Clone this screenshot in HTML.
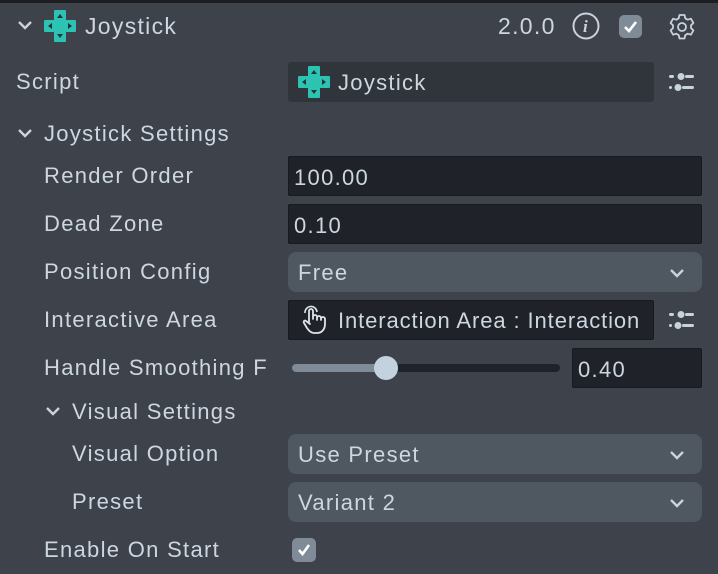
<!DOCTYPE html>
<html><head><meta charset="utf-8"><style>
*{margin:0;padding:0;box-sizing:border-box}
body{width:718px;height:574px;background:#3d424b;font-family:"Liberation Sans",sans-serif;color:#cdd7e1;font-size:22px;letter-spacing:1.3px;position:relative;overflow:hidden}
.a{position:absolute}
.t{position:absolute;line-height:24px;white-space:nowrap}
.in{position:absolute;background:#1f2228;border:1px solid #171a1e;border-radius:2px}
.dd{position:absolute;background:#4f5761;border-radius:8px}
svg{position:absolute}
</style></head><body>
<div class="a" style="left:0;top:0;width:718px;height:3px;background:#1c1e22"></div>

<svg style="left:16px;top:18px" width="18" height="14" viewBox="0 0 18 14"><path d="M3 4l6 6 6-6" fill="none" stroke="#c9d3dd" stroke-width="2.4"/></svg>
<svg style="left:44px;top:10px" width="32" height="32" viewBox="0 0 32 32"><path d="M11 1h10v10h10v10H21v10H11V21H1V11h10z" fill="#2cc3b3" stroke="#2cc3b3" stroke-width="2" stroke-linejoin="round"/><path d="M16 4l3 4h-6zM16 28l3-4h-6zM4 16l4-3v6zM28 16l-4-3v6z" fill="#25333a"/></svg>
<div class="t" style="left:85px;top:14px;font-size:23px">Joystick</div>
<div class="t" style="left:498px;top:14px;font-size:23px">2.0.0</div>
<svg style="left:572px;top:12px" width="28" height="28" viewBox="0 0 28 28"><circle cx="14" cy="14" r="12.5" fill="none" stroke="#c9d3dd" stroke-width="2"/><text x="14" y="20" text-anchor="middle" font-family="Liberation Serif" font-style="italic" font-weight="bold" font-size="17" fill="#c9d3dd">i</text></svg>
<div class="a" style="left:619px;top:15px;width:23px;height:23px;background:#7f8b97;border-radius:5px"></div>
<svg style="left:619px;top:15px" width="23" height="23" viewBox="0 0 23 23"><path d="M6 12l4 4 7-9" fill="none" stroke="#fff" stroke-width="2.6"/></svg>
<svg style="left:667px;top:12px" width="30" height="30" viewBox="0 0 30 30"><path d="M12.5 3h5l.8 3.3 2.4 1.4 3.2-1 2.5 4.3-2.4 2.3v2.8l2.4 2.3-2.5 4.3-3.2-1-2.4 1.4-.8 3.4h-5l-.8-3.4-2.4-1.4-3.2 1-2.5-4.3 2.4-2.3v-2.8L3.6 11l2.5-4.3 3.2 1 2.4-1.4z" fill="none" stroke="#c9d3dd" stroke-width="1.8" stroke-linejoin="round"/><circle cx="15" cy="15" r="4" fill="none" stroke="#c9d3dd" stroke-width="1.8"/></svg>

<div class="t" style="left:16px;top:70px">Script</div>
<div class="a" style="left:288px;top:62px;width:366px;height:40px;background:#30343b;border-radius:3px"></div>
<svg style="left:298px;top:66px" width="32" height="32" viewBox="0 0 32 32"><path d="M11 1h10v10h10v10H21v10H11V21H1V11h10z" fill="#2cc3b3" stroke="#2cc3b3" stroke-width="2" stroke-linejoin="round"/><path d="M16 4l3 4h-6zM16 28l3-4h-6zM4 16l4-3v6zM28 16l-4-3v6z" fill="#25333a"/></svg>
<div class="t" style="left:338px;top:71px">Joystick</div>
<svg style="left:668px;top:70px" width="27" height="24" viewBox="0 0 27 24"><g fill="#c9d3dd"><rect x="1" y="5" width="5" height="3" rx="1.5"/><rect x="17" y="5" width="9" height="3" rx="1.5"/><circle cx="13" cy="6.5" r="3.5"/><rect x="1" y="16" width="3" height="3" rx="1.5"/><rect x="14" y="16" width="12" height="3" rx="1.5"/><circle cx="10" cy="17.5" r="3.5"/></g></svg>

<svg style="left:16px;top:126px" width="18" height="14" viewBox="0 0 18 14"><path d="M3 4l6 6 6-6" fill="none" stroke="#c9d3dd" stroke-width="2.4"/></svg>
<div class="t" style="left:44px;top:122px">Joystick Settings</div>

<div class="t" style="left:44px;top:164px">Render Order</div>
<div class="in" style="left:288px;top:156px;width:414px;height:40px"></div>
<div class="t" style="left:294px;top:166px">100.00</div>

<div class="t" style="left:44px;top:212px">Dead Zone</div>
<div class="in" style="left:288px;top:204px;width:414px;height:40px"></div>
<div class="t" style="left:294px;top:214px">0.10</div>

<div class="t" style="left:44px;top:260px">Position Config</div>
<div class="dd" style="left:288px;top:252px;width:414px;height:40px"></div>
<div class="t" style="left:298px;top:261px">Free</div>
<svg style="left:668px;top:266px" width="18" height="14" viewBox="0 0 18 14"><path d="M3 4l6 6 6-6" fill="none" stroke="#c9d3dd" stroke-width="2.4"/></svg>

<div class="t" style="left:44px;top:308px">Interactive Area</div>
<div class="in" style="left:288px;top:300px;width:366px;height:40px"></div>
<svg style="left:300px;top:305px" width="28" height="30" viewBox="0 0 28 30"><path d="M9 17V6a2 2 0 014 0v8M13 12a2 2 0 014 0v3M17 13a2 2 0 014 0v2M21 14a2 2 0 014 0v5c0 5-3 9-8 9h-3c-3 0-5-2-7-5l-3-5c-1-2 1-3 2-2l4 3" fill="none" stroke="#dde4ea" stroke-width="1.8" stroke-linecap="round" stroke-linejoin="round"/><path d="M5 8a6 6 0 0112-1" fill="none" stroke="#dde4ea" stroke-width="1.6"/></svg>
<div class="t" style="left:338px;top:309px;letter-spacing:0.9px">Interaction Area : Interaction</div>
<svg style="left:668px;top:308px" width="27" height="24" viewBox="0 0 27 24"><g fill="#c9d3dd"><rect x="1" y="5" width="5" height="3" rx="1.5"/><rect x="17" y="5" width="9" height="3" rx="1.5"/><circle cx="13" cy="6.5" r="3.5"/><rect x="1" y="16" width="3" height="3" rx="1.5"/><rect x="14" y="16" width="12" height="3" rx="1.5"/><circle cx="10" cy="17.5" r="3.5"/></g></svg>

<div class="t" style="left:44px;top:356px;width:228px;overflow:hidden">Handle Smoothing F</div>
<div class="a" style="left:292px;top:364px;width:268px;height:8px;background:#1f2228;border-radius:4px"></div>
<div class="a" style="left:292px;top:364px;width:94px;height:8px;background:#7f8b97;border-radius:4px"></div>
<div class="a" style="left:374px;top:356px;width:24px;height:24px;background:#c3d2df;border-radius:50%"></div>
<div class="in" style="left:572px;top:348px;width:130px;height:40px"></div>
<div class="t" style="left:578px;top:358px">0.40</div>

<svg style="left:44px;top:404px" width="18" height="14" viewBox="0 0 18 14"><path d="M3 4l6 6 6-6" fill="none" stroke="#c9d3dd" stroke-width="2.4"/></svg>
<div class="t" style="left:72px;top:400px">Visual Settings</div>

<div class="t" style="left:72px;top:442px">Visual Option</div>
<div class="dd" style="left:288px;top:434px;width:414px;height:40px"></div>
<div class="t" style="left:298px;top:443px">Use Preset</div>
<svg style="left:668px;top:448px" width="18" height="14" viewBox="0 0 18 14"><path d="M3 4l6 6 6-6" fill="none" stroke="#c9d3dd" stroke-width="2.4"/></svg>

<div class="t" style="left:72px;top:490px">Preset</div>
<div class="dd" style="left:288px;top:482px;width:414px;height:40px"></div>
<div class="t" style="left:298px;top:491px">Variant 2</div>
<svg style="left:668px;top:496px" width="18" height="14" viewBox="0 0 18 14"><path d="M3 4l6 6 6-6" fill="none" stroke="#c9d3dd" stroke-width="2.4"/></svg>

<div class="t" style="left:44px;top:538px">Enable On Start</div>
<div class="a" style="left:292px;top:538px;width:24px;height:24px;background:#7f8b97;border-radius:5px"></div>
<svg style="left:292px;top:538px" width="24" height="24" viewBox="0 0 24 24"><path d="M7 12l3.5 4L17 7" fill="none" stroke="#fff" stroke-width="2.6"/></svg>
</body></html>
